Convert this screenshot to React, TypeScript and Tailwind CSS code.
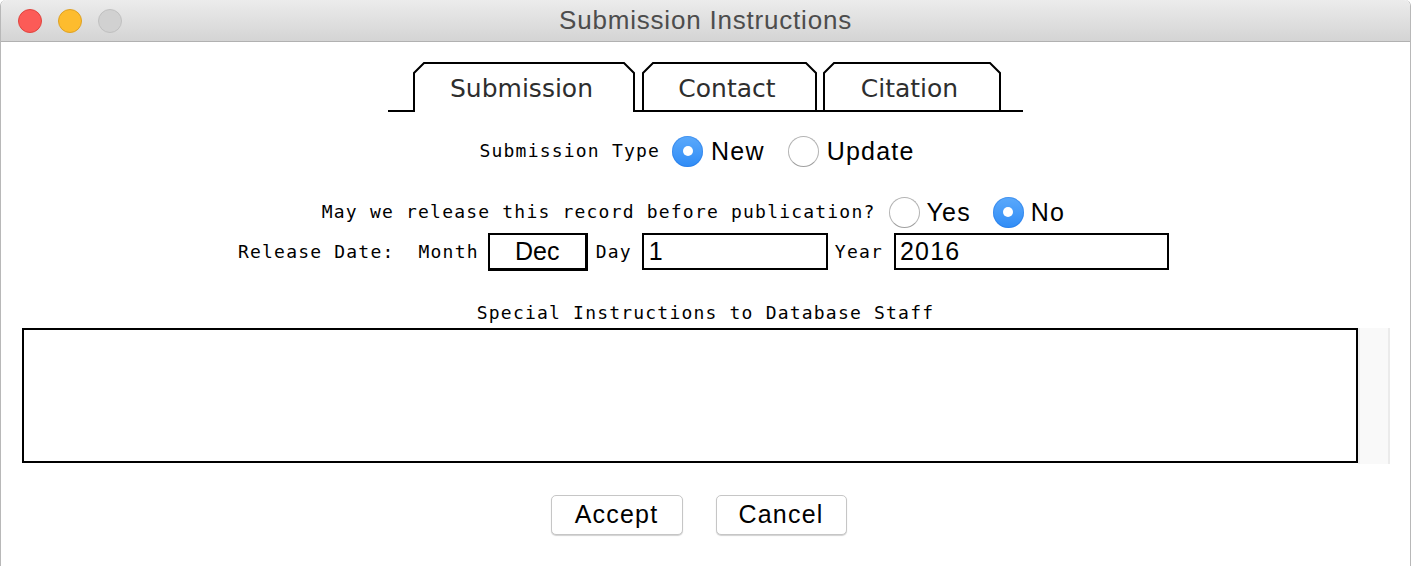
import React from 'react';

const mono = "font-['DejaVu_Sans_Mono',monospace] text-[18px] tracking-[1.2px] text-black whitespace-pre leading-[20px]";
const sans = "font-['Liberation_Sans',Arial,sans-serif] text-[25px] tracking-[1.2px] text-black leading-none";

const Tab: React.FC<{ label: string; width: number; active?: boolean }> = ({ label, width, active }) => {
  const h = 50;
  const outline = `M1 ${h} V11 L11 1 H${width - 11} L${width - 1} 11 V${h}`;
  return (
    <div className="relative h-[50px] flex items-center justify-center pr-[5px] pt-[4px]" style={{ width }}>
      <svg className="absolute inset-0" width={width} height={h} viewBox={`0 0 ${width} ${h}`} fill="none">
        <path d={outline} stroke="#000" strokeWidth="2" />
        {!active && <path d={`M0 ${h - 1} H${width}`} stroke="#000" strokeWidth="2" />}
      </svg>
      <span className="relative font-['DejaVu_Sans',sans-serif] text-[25px] text-[#2e2e2e]">{label}</span>
    </div>
  );
};

const Radio: React.FC<{ label: string; checked?: boolean; gap?: string }> = ({ label, checked, gap = 'gap-[8px]' }) => (
  <div className={`flex items-center ${gap}`}>
    {checked ? (
      <div className="w-[31px] h-[31px] rounded-full bg-gradient-to-b from-[#5aa9fb] to-[#2f8cf6] flex items-center justify-center shadow-[inset_0_0_0_1px_rgba(30,110,220,0.35)]">
        <div className="w-[10px] h-[10px] rounded-full bg-white" />
      </div>
    ) : (
      <div className="w-[31px] h-[31px] rounded-full bg-white border border-[#b4b4b4] border-b-[#a0a0a0]" />
    )}
    <span className={sans}>{label}</span>
  </div>
);

const Light: React.FC<{ cls: string }> = ({ cls }) => (
  <div className={`w-[24px] h-[24px] rounded-full border ${cls}`} />
);

export default function App() {
  return (
    <div className="w-[1412px] h-[566px] bg-white overflow-hidden">
      <div className="w-[1411px] h-[566px] bg-white border-x border-[#b8b8b8] rounded-t-[6px] flex flex-col">
        {/* Title bar */}
        <div className="h-[42px] shrink-0 grid grid-cols-[1fr_auto_1fr] items-center border-b border-[#b1b1b1] bg-gradient-to-b from-[#ececec] to-[#d4d4d4] rounded-t-[6px]">
          <div className="flex items-center gap-[16px] pl-[17px]">
            <Light cls="bg-[#fc5b57] border-[#e0443e]" />
            <Light cls="bg-[#fdbc2e] border-[#dea123]" />
            <Light cls="bg-[#d1d1d1] border-[#c0c0c0]" />
          </div>
          <div className="font-['Liberation_Sans',Arial,sans-serif] text-[26px] tracking-[0.8px] text-[#4d4d4d]">
            Submission Instructions
          </div>
          <div />
        </div>

        {/* Tabs */}
        <div className="mt-[20px] flex justify-center items-end h-[50px]">
          <div className="w-[25px] h-[2px] bg-black" />
          <Tab label="Submission" width={222} active />
          <div className="w-[7px] h-[2px] bg-black" />
          <Tab label="Contact" width={175} />
          <div className="w-[6px] h-[2px] bg-black" />
          <Tab label="Citation" width={178} />
          <div className="w-[22px] h-[2px] bg-black" />
        </div>

        {/* Submission type */}
        <div className="mt-[23px] h-[32px] flex justify-center items-center pr-[17px]">
          <span className={mono}>Submission Type</span>
          <div className="ml-[12px]">
            <Radio label="New" checked />
          </div>
          <div className="ml-[23px]">
            <Radio label="Update" />
          </div>
        </div>

        {/* Release */}
        <div className="mt-[29px] h-[32px] flex justify-center items-center pr-[24px]">
          <span className={mono}>May we release this record before publication?</span>
          <div className="ml-[14px]">
            <Radio label="Yes" gap="gap-[6px]" />
          </div>
          <div className="ml-[22px]">
            <Radio label="No" checked gap="gap-[7px]" />
          </div>
        </div>

        {/* Release date */}
        <div className="mt-[5px] h-[38px] flex justify-center items-start pr-[4px]">
          <span className={`${mono} h-[37px] flex items-center`}>Release Date:  Month</span>
          <div className="ml-[9px] w-[100px] h-[38px] border-l-2 border-t-2 border-r-[3px] border-b-[3px] border-black flex items-center justify-center">
            <span className="font-['Liberation_Sans',Arial,sans-serif] text-[25px] text-black leading-none">Dec</span>
          </div>
          <span className={`${mono} ml-[8px] h-[37px] flex items-center`}>Day</span>
          <div className="ml-[10px] w-[186px] h-[37px] border-2 border-black flex items-center pl-[5px]">
            <span className={sans}>1</span>
          </div>
          <span className={`${mono} ml-[7px] h-[37px] flex items-center`}>Year</span>
          <div className="ml-[11px] w-[275px] h-[37px] border-2 border-black flex items-center pl-[4px]">
            <span className={sans}>2016</span>
          </div>
        </div>

        {/* Special instructions */}
        <div className="mt-[32px] h-[20px] flex justify-center">
          <span className={mono}>Special Instructions to Database Staff</span>
        </div>
        <div className="mt-[5px] ml-[21px] flex">
          <div className="w-[1336px] h-[135px] border-2 border-black bg-white" />
          <div className="w-[32px] h-[136px] bg-[#f9f9f9] border-l-2 border-l-[#efefef] border-r-2 border-r-[#ebebeb]" />
        </div>

        {/* Buttons */}
        <div className="mt-[31px] flex justify-center gap-[33px] pr-[14px]">
          <button className="w-[132px] h-[40px] rounded-[5px] bg-white border border-[#c6c6c6] shadow-[0_1px_1px_rgba(0,0,0,0.18)] font-['Liberation_Sans',Arial,sans-serif] text-[25px] tracking-[1.2px] text-black">
            Accept
          </button>
          <button className="w-[131px] h-[40px] rounded-[5px] bg-white border border-[#c6c6c6] shadow-[0_1px_1px_rgba(0,0,0,0.18)] font-['Liberation_Sans',Arial,sans-serif] text-[25px] tracking-[1.2px] text-black">
            Cancel
          </button>
        </div>
      </div>
    </div>
  );
}
